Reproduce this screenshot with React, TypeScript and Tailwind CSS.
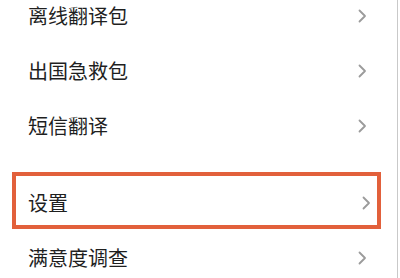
const font = { fontFamily: '"Noto Sans CJK SC", "Noto Sans", sans-serif' };

function Chevron() {
  return (
    <svg width="9" height="14" viewBox="0 0 9 14" fill="none" className="shrink-0">
      <path d="M1.5 1.5 L7 7 L1.5 12.5" stroke="#9b9b9b" strokeWidth="1.8" strokeLinecap="round" strokeLinejoin="round" />
    </svg>
  );
}

function Row({ label, className = '' }: { label: string; className?: string }) {
  return (
    <div className={`flex h-[55px] shrink-0 items-center justify-between pl-[28px] pr-[30px] ${className}`}>
      <span className="text-[20px] leading-none text-[#1f1f1f]">{label}</span>
      <Chevron />
    </div>
  );
}

export default function App() {
  return (
    <div className="flex h-[278px] w-[400px] overflow-hidden bg-white" style={font}>
      <div className="flex w-[397px] flex-col">
        <Row label="离线翻译包" className="-mt-[11.5px]" />
        <Row label="出国急救包" />
        <Row label="短信翻译" />

        {/* 高亮的设置项 */}
        <div className="ml-[12px] mr-[16px] mt-[18.5px] h-[57px] shrink-0 border-[4.5px] border-[#e2603b]">
          <div className="flex h-full items-center justify-between pl-[12px] pr-[6px] pt-[5px]">
            <span className="text-[20px] leading-none text-[#1f1f1f]">设置</span>
            <Chevron />
          </div>
        </div>

        <Row label="满意度调查" className="h-[58px]" />
      </div>
      <div className="w-px bg-[#c9c9c9]" />
      <div className="w-[2px] bg-white" />
    </div>
  );
}
